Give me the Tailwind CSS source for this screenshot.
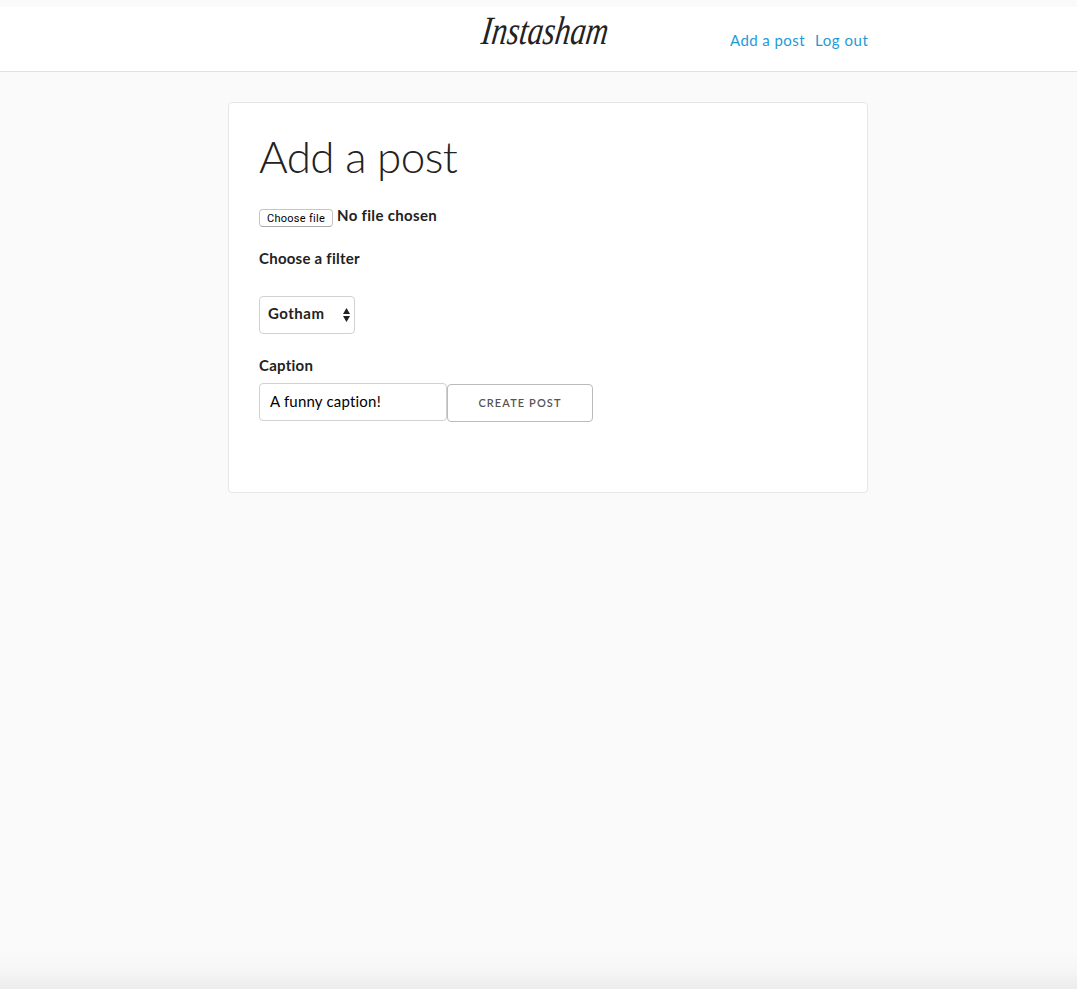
<!DOCTYPE html>
<html lang="en">
<head>
<meta charset="utf-8">
<title>Instasham</title>
<script src="https://cdn.jsdelivr.net/npm/@tailwindcss/browser@4"></script>
</head>
<body class="h-[989px] overflow-hidden bg-[#fafafa] pt-[7px] font-['Lato',sans-serif] text-[#222] flex flex-col">
  <header class="h-[65px] shrink-0 border-b border-[#e1e1e1] bg-white">
    <div class="ml-[228px] w-[640px] flex justify-between">
      <a class="ml-[254px] h-[48px] w-[128px] whitespace-nowrap font-['Liberation_Serif',serif] text-[40px] italic leading-[48px] origin-left scale-x-[0.77] -skew-x-10">Instasham</a>
      <nav class="flex gap-[10px] pt-[21px] text-[15px] leading-6 text-[#1e9bd7]">
        <a class="w-[75px] whitespace-nowrap tracking-[0.43px]">Add a post</a>
        <a class="w-[53px] whitespace-nowrap tracking-[0.55px]">Log out</a>
      </nav>
    </div>
  </header>
  <main class="ml-[228px] mt-[30px] h-[391px] w-[640px] shrink-0 rounded-[4px] border border-[#e6e6e6] bg-white px-[30px] pt-[28px]">
    <h1 class="h-[50px] whitespace-nowrap text-[44px] font-light leading-[50px] tracking-[-0.65px]">Add a post</h1>
    <div class="mt-[24px] flex h-[24px] gap-1">
      <button class="mt-[4px] h-[18px] w-[74px] whitespace-nowrap rounded-[4px] border border-[#c6c6c6] border-b-[#aaa] bg-white pt-px text-center font-['Roboto',sans-serif] text-[11px] leading-[16px] tracking-[0.28px] text-black">Choose file</button>
      <span class="text-[15px] font-bold leading-[20px] tracking-[0.32px]">No file chosen</span>
    </div>
    <div class="mt-[17px] h-6 text-[15px] font-bold leading-6 tracking-[0.25px]">Choose a filter</div>
    <div class="mt-[26px] flex h-[38px] w-[96px] items-center justify-between rounded-[4px] border border-[#d1d1d1] bg-white pl-2 pr-1 text-[15px] font-bold">
      <span class="-mt-[4px] tracking-[0.5px]">Gotham</span>
      <svg class="h-[14px] w-[7px]" viewBox="0 0 7 14" fill="#222"><path d="M3.5 0L7 6H0zM3.5 14L0 8h7z"/></svg>
    </div>
    <div class="mt-[19px] h-6 text-[15px] font-bold leading-6 tracking-[0.25px]">Caption</div>
    <div class="mt-[6px] flex">
      <div class="h-[38px] w-[188px] rounded-[4px] border border-[#d1d1d1] pl-[10px] text-[15px] leading-[35px] tracking-[0.2px] text-black">A funny caption!</div>
      <button class="mt-[1px] h-[38px] w-[146px] whitespace-nowrap rounded-[4px] border border-[#bbb] text-center text-[11px] font-semibold leading-[36px] tracking-[1.1px] text-[#555]">CREATE POST</button>
    </div>
  </main>
  <div class="mt-auto h-[38px] shrink-0 bg-linear-to-b from-[#fafafa] via-[#f6f6f6] to-[#ececec]"></div>
</body>
</html>
